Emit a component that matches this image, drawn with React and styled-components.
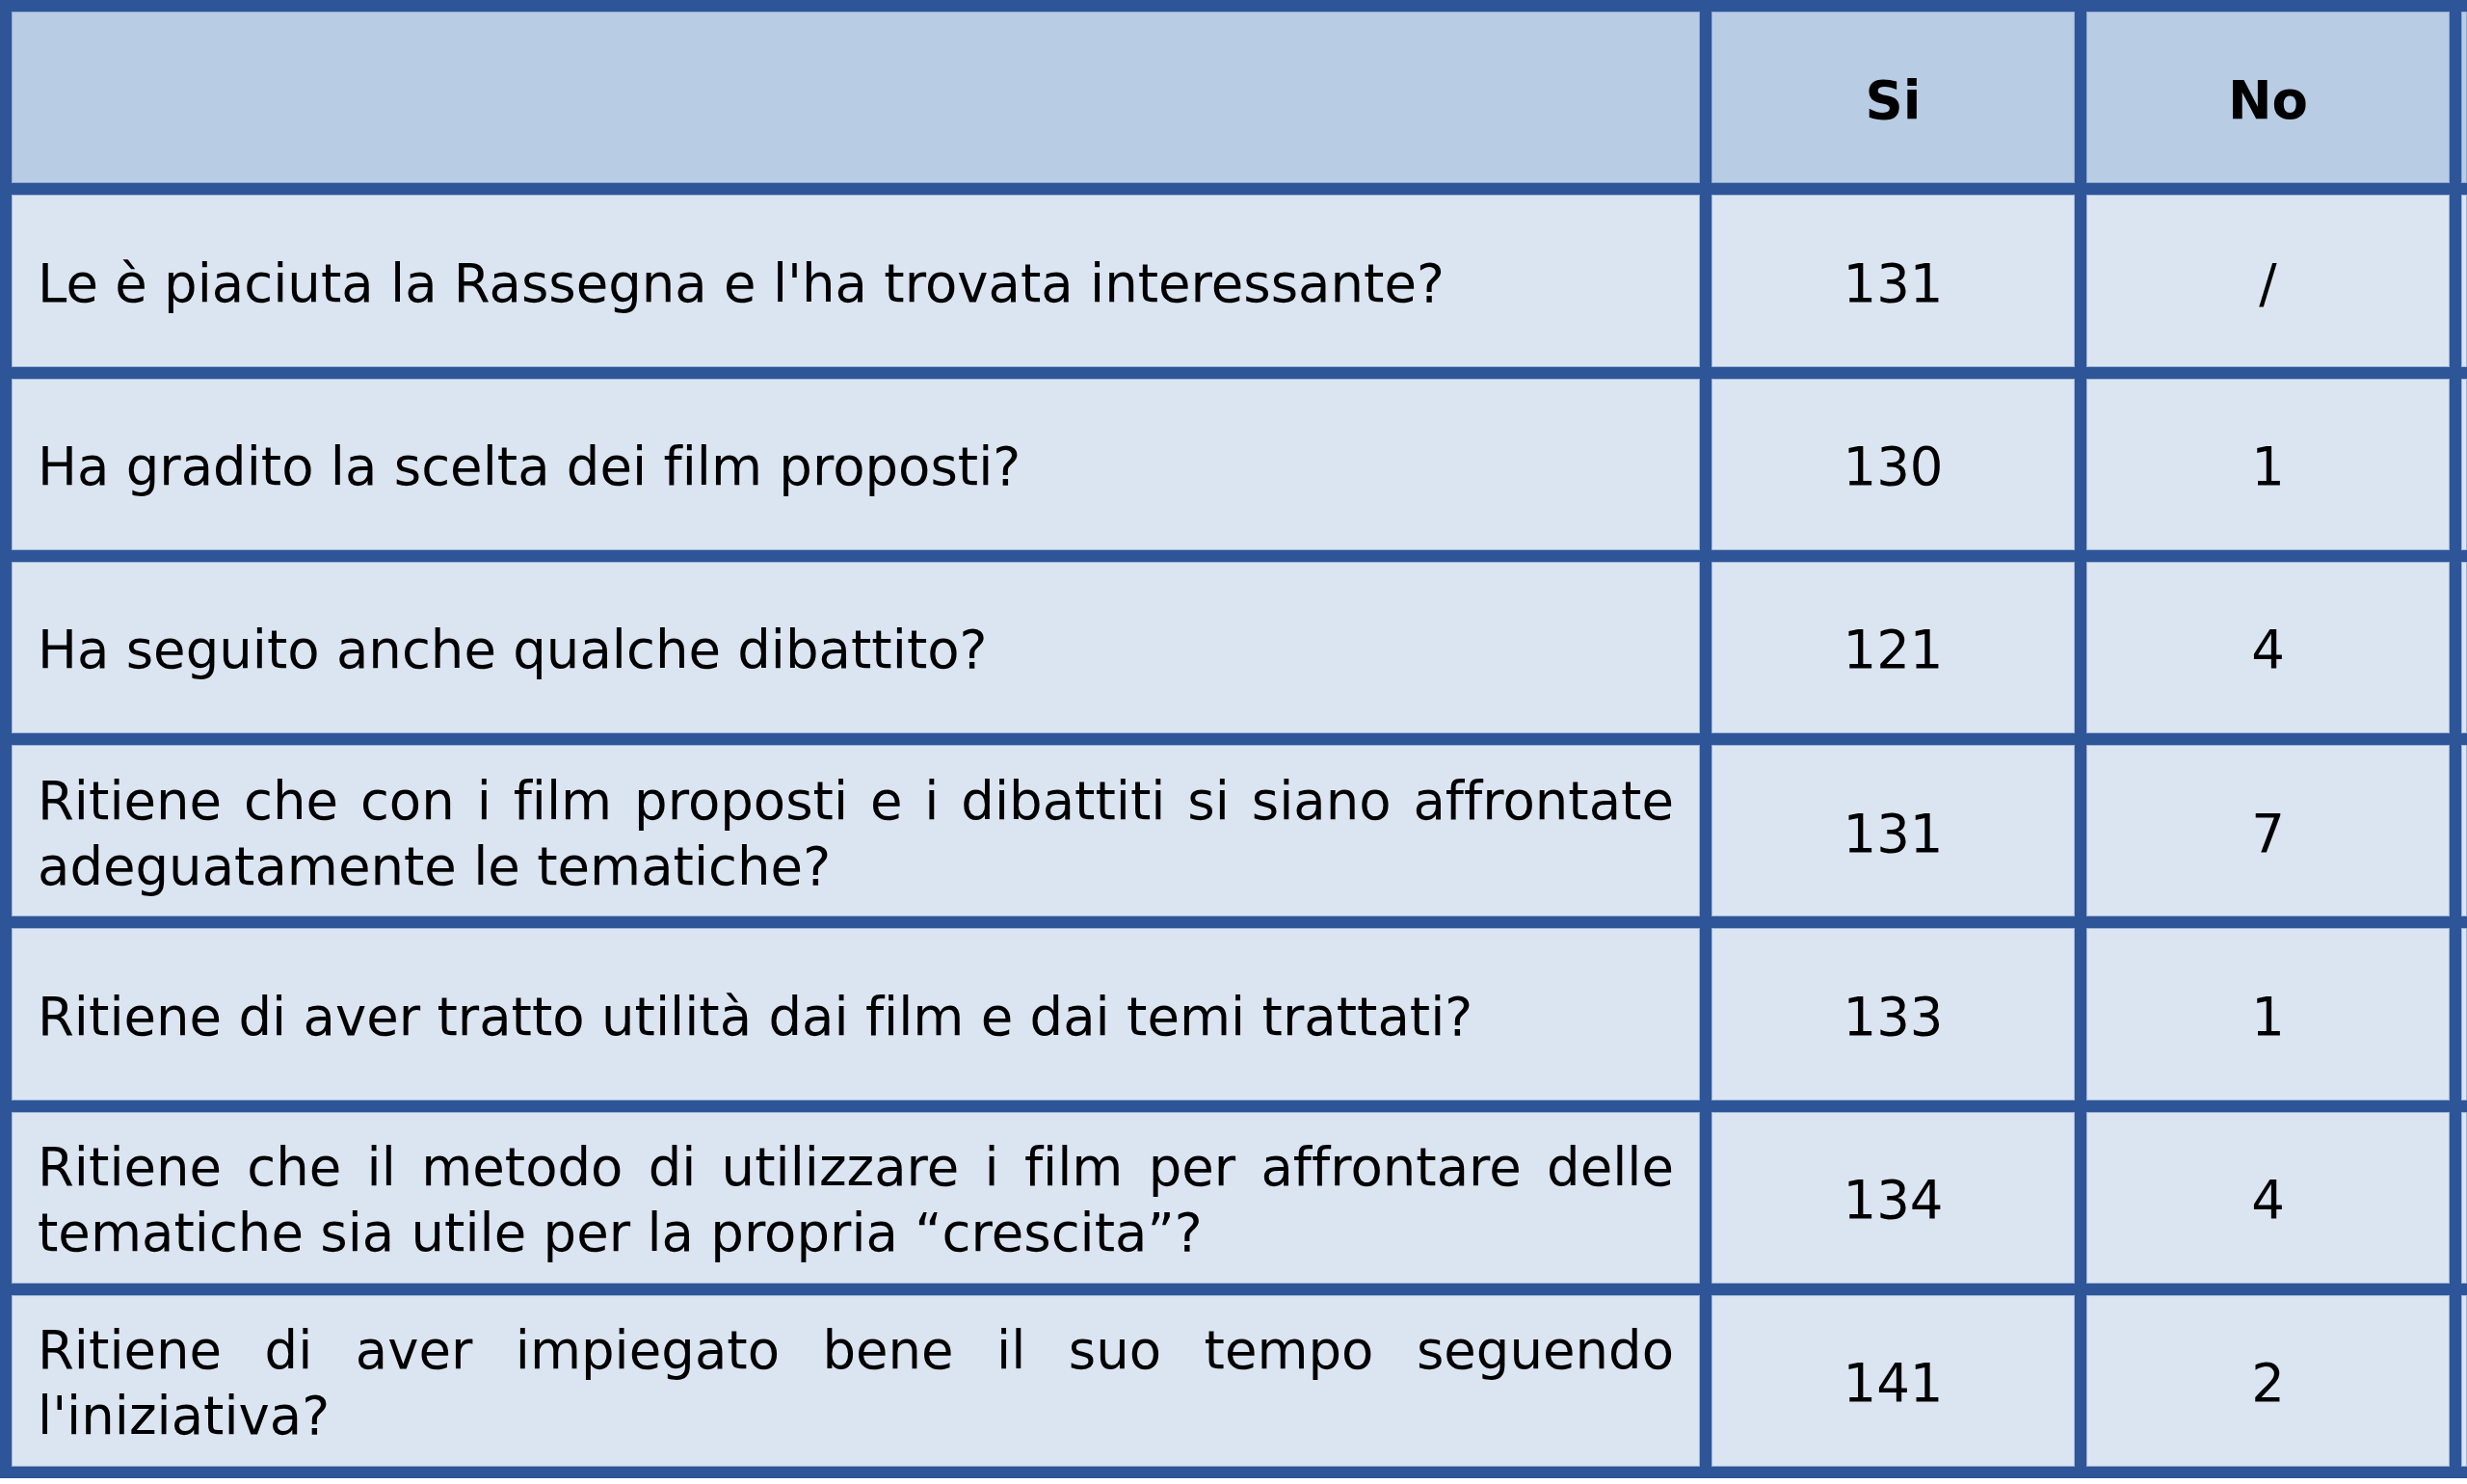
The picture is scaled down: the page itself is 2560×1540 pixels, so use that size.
import React from "react";
import styled, { createGlobalStyle } from "styled-components";

const GlobalStyle = createGlobalStyle`
  html, body {
    margin: 0;
    padding: 0;
    background: #ffffff;
    overflow: hidden;
  }
  body {
    font-family: "DejaVu Sans", "Liberation Sans", sans-serif;
    color: #000;
    font-variant-ligatures: none;
  }
`;

const Table = styled.div`
  display: grid;
  grid-template-columns: 1752px 377px 377px 6px;
  grid-auto-rows: 178.25px;
  gap: 12px;
  padding: 12px 0 12px 12px;
  width: 2560px;
  box-sizing: border-box;
  background: #2e5597;
`;

const Cell = styled.div`
  display: flex;
  align-items: center;
  justify-content: ${(p) => (p.$center ? "center" : "flex-start")};
  padding-top: 5px;
  box-sizing: border-box;
  background: ${(p) => (p.$head ? "#b8cce4" : "#dbe5f1")};
  font-size: 54.5px;
  line-height: 68px;
  font-weight: ${(p) => (p.$head ? 700 : 400)};
  font-variant-ligatures: none;
  box-shadow: inset 0 0 0 1px rgba(110, 140, 195, 0.55);
`;

const Question = styled(Cell)`
  padding: 5px 27px 0;
`;

const QuestionText = styled.div`
  width: 100%;
`;

const Line = styled.div`
  white-space: nowrap;
  text-align: ${(p) => (p.$justify ? "justify" : "left")};
  text-align-last: ${(p) => (p.$justify ? "justify" : "left")};
`;

const rows = [
  { q: ["Le è piaciuta la Rassegna e l'ha trovata interessante?"], si: "131", no: "/" },
  { q: ["Ha gradito la scelta dei film proposti?"], si: "130", no: "1" },
  { q: ["Ha seguito anche qualche dibattito?"], si: "121", no: "4" },
  {
    q: ["Ritiene che con i film proposti e i dibattiti si siano affrontate", "adeguatamente le tematiche?"],
    si: "131",
    no: "7",
  },
  { q: ["Ritiene di aver tratto utilità dai film e dai temi trattati?"], si: "133", no: "1" },
  {
    q: ["Ritiene che il metodo di utilizzare i film per affrontare delle", "tematiche sia utile per la propria “crescita”?"],
    si: "134",
    no: "4",
  },
  {
    q: ["Ritiene di aver impiegato bene il suo tempo seguendo", "l'iniziativa?"],
    si: "141",
    no: "2",
  },
];

export default function App() {
  return (
    <>
      <GlobalStyle />
      <Table>
        <Cell $head />
        <Cell $head $center>Si</Cell>
        <Cell $head $center>No</Cell>
        <Cell $head />
        {rows.map((r, i) => (
          <React.Fragment key={i}>
            <Question>
              <QuestionText>
                {r.q.map((l, j) => (
                  <Line key={j} $justify={r.q.length > 1 && j < r.q.length - 1}>
                    {l}
                  </Line>
                ))}
              </QuestionText>
            </Question>
            <Cell $center>{r.si}</Cell>
            <Cell $center>{r.no}</Cell>
            <Cell />
          </React.Fragment>
        ))}
      </Table>
    </>
  );
}
